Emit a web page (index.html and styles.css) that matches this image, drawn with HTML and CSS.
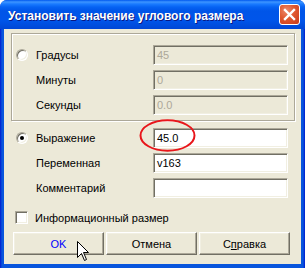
FILE: index.html
```html
<!DOCTYPE html>
<html lang="ru">
<head>
  <meta charset="UTF-8" />
  <title>Установить значение углового размера</title>
  <link rel="stylesheet" href="styles.css">
</head>
<body>
  <div class="window">
    <div class="titlebar">
      <span class="title">Установить значение углового размера</span>
      <span class="close-btn">
        <svg width="13" height="13" viewBox="0 0 13 13">
          <path d="M2 2 L11 11 M11 2 L2 11" stroke="#fff" stroke-width="2.4" stroke-linecap="square"/>
        </svg>
      </span>
    </div>

    <div class="client">
      <!-- Degrees / minutes / seconds -->
      <div class="group">
        <div class="row">
          <span class="opt"><span class="radio"></span></span>
          <span class="label">Градусы</span>
          <span class="edit disabled">45</span>
        </div>
        <div class="row">
          <span class="opt"></span>
          <span class="label">Минуты</span>
          <span class="edit disabled">0</span>
        </div>
        <div class="row">
          <span class="opt"></span>
          <span class="label">Секунды</span>
          <span class="edit disabled">0.0</span>
        </div>
      </div>

      <!-- Expression -->
      <div class="lower">
        <div class="row">
          <span class="opt"><span class="radio checked"></span></span>
          <span class="label">Выражение</span>
          <span class="edit">45.0</span>
        </div>
        <div class="row">
          <span class="opt"></span>
          <span class="label">Переменная</span>
          <span class="edit">v163</span>
        </div>
        <div class="row">
          <span class="opt"></span>
          <span class="label">Комментарий</span>
          <span class="edit"></span>
        </div>
      </div>

      <div class="check-row">
        <span class="checkbox"></span>
        <span>Информационный размер</span>
      </div>

      <div class="buttons">
        <span class="btn default">OK</span>
        <span class="btn">Отмена</span>
        <span class="btn">С<u>п</u>равка</span>
      </div>
    </div>

    <svg class="mark" width="58" height="35" viewBox="0 0 58 35">
      <ellipse cx="28.5" cy="16.5" rx="27" ry="15.2" fill="none" stroke="#e8161b" stroke-width="2"/>
    </svg>

    <svg class="cursor" width="13" height="21" viewBox="0 0 13 21">
      <path d="M0.5 0.5 L0.5 16.5 L4.5 12.5 L7.5 19.5 L9.5 18.5 L6.5 11.5 L11.5 11.5 Z" fill="#fff" stroke="#000" stroke-width="1"/>
    </svg>
  </div>
</body>
</html>
```

FILE: styles.css
```css
* {
  box-sizing: border-box;
}

body {
  margin: 0;
  background: #fff;
  font-family: "Liberation Sans", Arial, sans-serif;
  font-size: 11px;
  color: #000;
}

.window {
  position: relative;
  width: 305px;
  height: 268px;
  display: flex;
  flex-direction: column;
  border-radius: 7px 7px 0 0;
  overflow: hidden;
  background: linear-gradient(to right, #0019cf 0, #0855dd 2px, #0855dd 303px, #0019cf 305px);
}

.titlebar {
  height: 29px;
  display: flex;
  align-items: center;
  justify-content: space-between;
  padding: 2px 5px 0 8px;
  background: linear-gradient(to bottom, #0058ee 0, #3d95ff 2px, #1a7bff 4px, #0663f3 7px, #0055e8 11px, #0055ea 20px, #004cdc 26px, #0046d6 29px);
}

.title {
  color: #fff;
  font-weight: bold;
  font-size: 12px;
  text-shadow: 1px 1px 0 #0a1883;
  white-space: nowrap;
}

.close-btn {
  width: 21px;
  height: 21px;
  margin-top: -2px;
  display: flex;
  align-items: center;
  justify-content: center;
  border: 1px solid #fff;
  border-radius: 3px;
  background: radial-gradient(circle at 35% 30%, #ec8a6c 0, #e0582f 45%, #c8391a 100%);
}

.client {
  margin: 0 4px 4px;
  height: 235px;
  background: #ece9d8;
  padding: 4px 0 0 7px;
}

.group {
  width: 284px;
  height: 88px;
  border: 1px solid #aca899;
  box-shadow: inset 1px 1px 0 #fff, 1px 1px 0 #fff;
  padding: 11px 0 0 4px;
  display: flex;
  flex-direction: column;
  gap: 5px;
}

.lower {
  margin: 7px 0 0 5px;
  display: flex;
  flex-direction: column;
  gap: 5px;
}

.row {
  display: flex;
  align-items: center;
  height: 20px;
}

.opt {
  width: 20px;
  display: flex;
  align-items: center;
}

.label {
  width: 117px;
}

.radio {
  width: 12px;
  height: 12px;
  border-radius: 50%;
  border: 1px solid;
  border-color: #aca899 #fff #fff #aca899;
  background: #fff;
  box-shadow: inset 1px 1px 0 #716f64, inset -1px -1px 0 #f1efe2;
  display: flex;
  align-items: center;
  justify-content: center;
}

.radio.checked::after {
  content: "";
  width: 4px;
  height: 4px;
  border-radius: 50%;
  background: #000;
}

.edit {
  width: 135px;
  height: 20px;
  padding: 0 3px;
  display: flex;
  align-items: center;
  background: #fff;
  border: 1px solid;
  border-color: #aca899 #fff #fff #aca899;
  box-shadow: inset 1px 1px 0 #716f64, inset -1px -1px 0 #f1efe2;
}

.edit.disabled {
  background: #ece9d8;
  color: #aca899;
}

.check-row {
  margin: 13px 0 0 4px;
  display: flex;
  align-items: center;
  gap: 7px;
  height: 13px;
}

.checkbox {
  width: 13px;
  height: 13px;
  background: #fff;
  border: 1px solid;
  border-color: #aca899 #fff #fff #aca899;
  box-shadow: inset 1px 1px 0 #716f64, inset -1px -1px 0 #f1efe2;
}

.buttons {
  margin: 8px 0 0 2px;
  display: flex;
  gap: 2px;
}

.btn {
  width: 91px;
  height: 23px;
  display: flex;
  align-items: center;
  justify-content: center;
  background: #ece9d8;
  border: 1px solid;
  border-color: #fff #716f64 #716f64 #fff;
  box-shadow: inset -1px -1px 0 #aca899, inset 1px 1px 0 #f1efe2;
}

.btn.default {
  color: #0000ff;
}

.mark {
  position: absolute;
  left: 139px;
  top: 119px;
}

.cursor {
  position: absolute;
  left: 77px;
  top: 241px;
}
```
